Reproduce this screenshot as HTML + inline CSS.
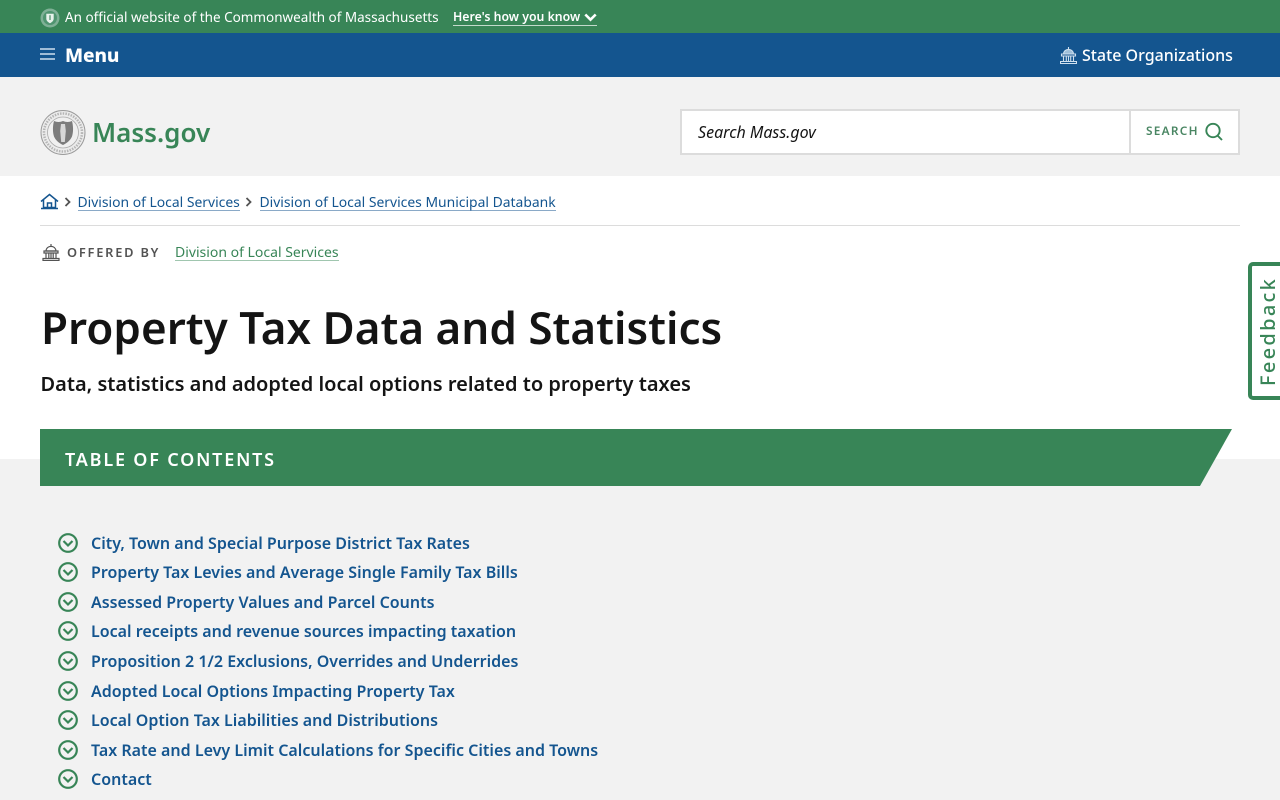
<!DOCTYPE html>
<html lang="en"><head><meta charset="utf-8"><title>Property Tax Data and Statistics | Mass.gov</title>
<style>
*{box-sizing:border-box}
html,body{margin:0;padding:0;width:1280px;height:800px;overflow:hidden;background:#f2f2f2}
body{position:relative;font-family:"Noto Sans","Liberation Sans",sans-serif;color:#141414}
.a{position:absolute;white-space:nowrap;line-height:1}
a{color:inherit;text-decoration:none}
.bl{color:#14558f;font-size:13.900px;line-height:15px;border-bottom:1px solid #8aa9c7}
.toc{position:absolute;left:91px;color:#14558f;font-size:16px;font-weight:600;line-height:22px;letter-spacing:.01px;white-space:nowrap}
.ic{position:absolute;left:58px;width:20px;height:20px}
</style></head><body>
<div class="a" style="left:0;top:0;width:1280px;height:33px;background:#388557"></div>
<div class="a" style="left:0;top:33px;width:1280px;height:44px;background:#14558f"></div>
<div class="a" style="left:0;top:176px;width:1280px;height:283px;background:#fff"></div>

<svg class="a" style="left:40px;top:8px" width="20" height="20" viewBox="0 0 20 20"><circle cx="10" cy="10" r="9.500" fill="#7fb096"/><circle cx="10" cy="10" r="7" fill="#4f9470"/><path d="M6.300 5.800h7.400v4.800c0 2.200-1.700 3.600-3.700 4.700-2-1.100-3.700-2.500-3.700-4.700z" fill="#e8f2ec"/><path d="M9.300 7.200h1.400v4.800H9.300z" fill="#5f9a7a"/></svg>
<div class="a" style="left:65px;top:8px;font-size:13.500px;line-height:18px;color:#fff">An official website of the Commonwealth of Massachusetts</div>
<div class="a" style="left:453px;top:9px;font-size:12.300px;line-height:16px;height:17px;width:144px;font-weight:600;color:#fff;border-bottom:1px solid #c3dacc">Here's how you know</div>
<svg class="a" style="left:584px;top:13px" width="13" height="10" viewBox="0 0 13 10"><path d="M1.300 1.500l5.200 5.200 5.200-5.200" fill="none" stroke="#fff" stroke-width="2.600"/></svg>

<svg class="a" style="left:40px;top:48px" width="15" height="13" viewBox="0 0 15 13"><path d="M0 1h15M0 6h15M0 11h15" stroke="#cfe0ef" stroke-width="1.400"/></svg>
<div class="a" style="left:65px;top:42px;font-size:19px;line-height:26px;font-weight:800;letter-spacing:-.1px;color:#fff">Menu</div>

<svg class="a" style="left:1060px;top:46px" width="17" height="18" viewBox="0 0 17 18"><g fill="none" stroke="#cfe0ef" stroke-width="1.100"><path d="M8.500 1v2.500"/><path d="M3.500 8c.3-3 2.400-4.600 5-4.600s4.700 1.600 5 4.600z" fill="#9fbfd9"/><path d="M1.500 8h14v2h-14zM.5 15.500h16v2H.5z"/><path d="M3.500 10v5.500M6.300 10v5.500M8.500 10v5.500M10.700 10v5.500M13.500 10v5.500"/></g></svg>
<div class="a" style="left:1082px;top:44px;font-size:16px;line-height:22px;font-weight:500;color:#fff">State Organizations</div>

<svg class="a" style="left:40px;top:110px" width="46" height="46" viewBox="0 0 46 46"><circle cx="23" cy="22.500" r="22" fill="#ececec" stroke="#9a9a9a" stroke-width="1"/><circle cx="23" cy="22.500" r="19" fill="none" stroke="#b5b5b5" stroke-width="2.500" stroke-dasharray="1.500 1.200"/><circle cx="23" cy="22.500" r="15.500" fill="#f0f0f0" stroke="#aaa" stroke-width=".8"/><path d="M14 11c3 1.300 6 1.300 9 0 3 1.300 6 1.300 9 0 1.400 5.500 1.400 11 0 15.500-1.700 4-5 6.500-9 8.500-4-2-7.300-4.500-9-8.500-1.400-4.500-1.400-10 0-15.500z" fill="#7c7c7c"/><path d="M21 14h4l.8 7-1 11h-3.600l-1-11z" fill="#d8d8d8"/></svg>
<div class="a" style="left:92px;top:113px;font-size:26px;line-height:38px;font-weight:600;color:#388557">Mass.gov</div>

<div class="a" style="left:680px;top:109px;width:560px;height:46px;background:#fff;border:2px solid #dcdcdc"></div>
<div class="a" style="left:1129px;top:110px;width:2px;height:44px;background:#dcdcdc"></div>
<div class="a" style="left:698px;top:122px;font-size:16px;line-height:21px;font-style:italic;color:#141414">Search Mass.gov</div>
<div class="a" style="left:1146px;top:124px;font-size:11.800px;line-height:15px;font-weight:600;letter-spacing:1.300px;color:#4a8663">SEARCH</div>
<svg class="a" style="left:1204px;top:122px" width="19" height="19" viewBox="0 0 19 19"><circle cx="9" cy="8.500" r="6.700" fill="none" stroke="#388557" stroke-width="1.900"/><path d="M13.500 13.500l4.500 4.500" stroke="#388557" stroke-width="1.900"/></svg>

<svg class="a" style="left:40px;top:193px" width="19" height="17" viewBox="0 0 19 17"><path d="M1 8.500L9.500 1.500 18 8.500M3.500 7v7.500h12V7M7.500 14.500V10h4v4.500M1 15.500h17" fill="none" stroke="#14558f" stroke-width="1.500"/></svg>
<svg class="a" style="left:64px;top:197px" width="8" height="10" viewBox="0 0 8 10"><path d="M1.500 1l4 4-4 4" fill="none" stroke="#535353" stroke-width="1.800"/></svg>
<a class="a bl" style="left:77.500px;top:195px">Division of Local Services</a>
<svg class="a" style="left:245px;top:197px" width="8" height="10" viewBox="0 0 8 10"><path d="M1.500 1l4 4-4 4" fill="none" stroke="#535353" stroke-width="1.800"/></svg>
<a class="a bl" style="left:259.500px;top:195px">Division of Local Services Municipal Databank</a>
<div class="a" style="left:40px;top:225px;width:1200px;height:1px;background:#dcdcdc"></div>

<svg class="a" style="left:42px;top:243px" width="18" height="18" viewBox="0 0 17 18"><g fill="none" stroke="#535353" stroke-width="1.200"><path d="M8.500 1v2.500"/><path d="M3.500 8c.3-3 2.400-4.600 5-4.600s4.700 1.600 5 4.600z"/><path d="M1.500 8h14v2h-14zM.5 15.500h16v2H.5z"/><path d="M3.500 10v5.500M6.300 10v5.500M8.500 10v5.500M10.700 10v5.500M13.500 10v5.500"/></g></svg>
<div class="a" style="left:67px;top:244px;font-size:12.800px;line-height:17px;font-weight:600;letter-spacing:1.800px;color:#535353">OFFERED BY</div>
<a class="a" style="left:175px;top:245px;font-size:14px;line-height:15px;color:#388557;border-bottom:1px solid #a0c6af">Division of Local Services</a>

<div class="a" style="left:41px;top:297px;font-size:44px;line-height:60px;font-weight:600;color:#141414">Property Tax Data and Statistics</div>
<div class="a" style="left:40.500px;top:371px;font-size:20px;line-height:26px;font-weight:600;color:#141414">Data, statistics and adopted local options related to property taxes</div>

<svg class="a" style="left:40px;top:429px" width="1192" height="57" viewBox="0 0 1192 57"><path d="M0 0H1192L1160 57H0z" fill="#388557"/></svg>
<div class="a" style="left:65px;top:448px;font-size:18px;line-height:24px;font-weight:600;letter-spacing:1.800px;color:#fff">TABLE OF CONTENTS</div>

<div class="a" style="left:1248px;top:262px;width:40px;height:138px;border:4px solid #388557;border-radius:5px;background:#fff"></div>
<div class="a" style="left:1257px;top:386px;font-size:20px;line-height:21px;font-weight:500;letter-spacing:2.300px;color:#388557;transform-origin:0 0;transform:rotate(-90deg)">Feedback</div>

<svg width="0" height="0" style="position:absolute"><defs><symbol id="c" viewBox="0 0 20 20"><circle cx="10" cy="10" r="8.800" fill="none" stroke="#388557" stroke-width="2.200"/><path d="M5.500 8l4.500 4.500L14.500 8" fill="none" stroke="#388557" stroke-width="2.200"/></symbol></defs></svg>
<svg class="ic" style="top:533px"><use href="#c"/></svg><a class="toc" style="top:532px">City, Town and Special Purpose District Tax Rates</a>
<svg class="ic" style="top:562px"><use href="#c"/></svg><a class="toc" style="top:561px">Property Tax Levies and Average Single Family Tax Bills</a>
<svg class="ic" style="top:592px"><use href="#c"/></svg><a class="toc" style="top:591px">Assessed Property Values and Parcel Counts</a>
<svg class="ic" style="top:621px"><use href="#c"/></svg><a class="toc" style="top:620px">Local receipts and revenue sources impacting taxation</a>
<svg class="ic" style="top:651px"><use href="#c"/></svg><a class="toc" style="top:650px">Proposition 2 1/2 Exclusions, Overrides and Underrides</a>
<svg class="ic" style="top:681px"><use href="#c"/></svg><a class="toc" style="top:680px">Adopted Local Options Impacting Property Tax</a>
<svg class="ic" style="top:710px"><use href="#c"/></svg><a class="toc" style="top:709px">Local Option Tax Liabilities and Distributions</a>
<svg class="ic" style="top:740px"><use href="#c"/></svg><a class="toc" style="top:739px">Tax Rate and Levy Limit Calculations for Specific Cities and Towns</a>
<svg class="ic" style="top:769px"><use href="#c"/></svg><a class="toc" style="top:768px">Contact</a>
</body></html>
